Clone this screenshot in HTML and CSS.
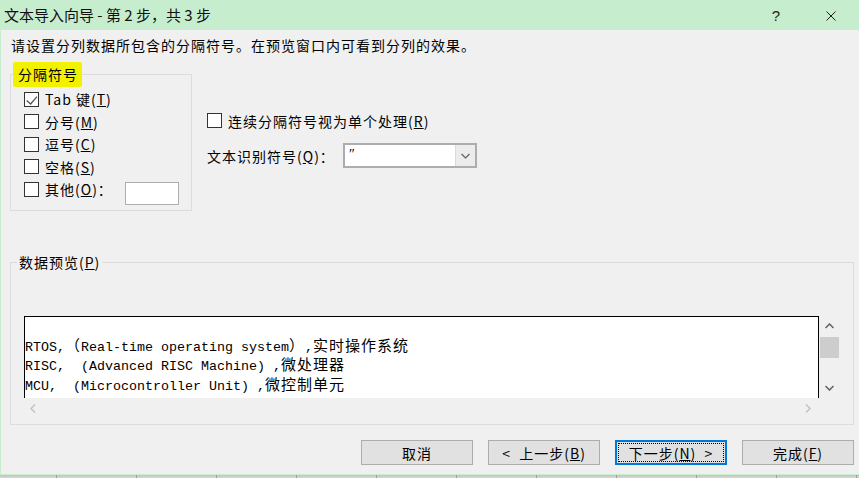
FILE: index.html
```html
<!DOCTYPE html>
<html lang="zh-CN">
<head>
<meta charset="utf-8">
<title>文本导入向导</title>
<link rel="stylesheet" href="styles.css">
</head>
<body>
<div class="window">
  <header class="titlebar">
    <span class="title">文本导入向导 - 第 2 步，共 3 步</span>
    <span class="tb-help">?</span>
    <svg class="tb-close" viewBox="0 0 10 10" width="10" height="10"><path d="M0.5 0.5L9.5 9.5M9.5 0.5L0.5 9.5" stroke="#1e1e1e" stroke-width="1" fill="none"/></svg>
  </header>
  <main class="client">
    <p class="intro">请设置分列数据所包含的分隔符号。在预览窗口内可看到分列的效果。</p>
    <div class="options">
      <fieldset class="group delims">
        <legend class="hl">分隔符号</legend>
        <div class="row"><span class="cb"><svg viewBox="0 0 13 13" width="13" height="13"><path d="M1.7 7.6L5.6 11L12 3.6" fill="none" stroke="#555" stroke-width="1.3"/></svg></span>Tab 键(<u>T</u>)</div>
        <div class="row"><span class="cb"></span>分号(<u>M</u>)</div>
        <div class="row"><span class="cb"></span>逗号(<u>C</u>)</div>
        <div class="row"><span class="cb"></span>空格(<u>S</u>)</div>
        <div class="row other"><span class="cb"></span>其他(<u>O</u>)：<span class="textbox"></span></div>
      </fieldset>
      <div class="mid">
        <div class="row"><span class="cb"></span>连续分隔符号视为单个处理(<u>R</u>)</div>
        <div class="row qual">
          <span class="qlabel">文本识别符号(<u>Q</u>)：</span>
          <span class="combo">
            <span class="combo-val">″</span>
            <span class="combo-btn"><svg viewBox="0 0 9 6" width="9" height="6"><path d="M0.5 1L4.5 5L8.5 1" fill="none" stroke="#606060" stroke-width="1.2"/></svg></span>
          </span>
        </div>
      </div>
    </div>
    <fieldset class="group preview">
      <legend>数据预览(<u>P</u>)</legend>
      <div class="pv">
        <div class="pv-list">
          <div class="pv-line"></div>
          <div class="pv-line">RTOS,<span class="cj">（</span>Real-time operating system<span class="cj">）</span>,<span class="cj">实时操作系统</span></div>
          <div class="pv-line">RISC,  (Advanced RISC Machine) ,<span class="cj">微处理器</span></div>
          <div class="pv-line">MCU,  (Microcontroller Unit) ,<span class="cj">微控制单元</span></div>
        </div>
        <div class="vscroll">
          <span class="sb-arrow"><svg viewBox="0 0 9 6" width="9" height="6"><path d="M0.5 5L4.5 1L8.5 5" fill="none" stroke="#606060" stroke-width="1.5"/></svg></span>
          <span class="thumb"></span>
          <span class="sb-fill"></span>
          <span class="sb-arrow"><svg viewBox="0 0 9 6" width="9" height="6"><path d="M0.5 1L4.5 5L8.5 1" fill="none" stroke="#606060" stroke-width="1.5"/></svg></span>
        </div>
        <div class="hscroll">
          <span class="hs-arrow"><svg viewBox="0 0 6 9" width="6" height="9"><path d="M5 0.5L1 4.5L5 8.5" fill="none" stroke="#c2c2c2" stroke-width="1.5"/></svg></span>
          <span class="hs-arrow"><svg viewBox="0 0 6 9" width="6" height="9"><path d="M1 0.5L5 4.5L1 8.5" fill="none" stroke="#c2c2c2" stroke-width="1.5"/></svg></span>
        </div>
      </div>
    </fieldset>
    <div class="buttons">
      <span class="btn">取消</span>
      <span class="btn">&lt;  上一步(<u>B</u>)</span>
      <span class="btn default"><span class="focus">下一步(<u>N</u>)  &gt;</span></span>
      <span class="btn">完成(<u>F</u>)</span>
    </div>
  </main>
  <div class="desk"></div>
</div>
</body>
</html>
```

FILE: styles.css
```css
* { box-sizing: border-box; }
html, body { margin: 0; padding: 0; }
body {
  width: 859px;
  height: 478px;
  overflow: hidden;
  background: #f0f0f0;
  font-family: "Noto Sans CJK SC", "Noto Sans", sans-serif;
  color: #000;
}
.window {
  display: flex;
  flex-direction: column;
  width: 859px;
  height: 478px;
}
.titlebar {
  flex: none;
  height: 30px;
  background: #c7edcf;
  display: flex;
  align-items: center;
}
.title {
  flex: 1;
  padding-left: 4px;
  font-size: 15px;
  line-height: 30px;
  color: #111;
  white-space: pre;
}
.tb-help {
  width: 12px;
  text-align: center;
  font-family: "Liberation Sans", sans-serif;
  font-size: 15px;
  color: #222;
  margin-right: 44px;
}
.tb-close {
  display: block;
  margin: 2px 23px 0 0;
}
.client {
  flex: none;
  height: 445px;
  background: #f0f0f0;
  border-left: 1px solid #c7edcf;
  border-bottom: 1px solid #c7edcf;
  display: flex;
  flex-direction: column;
  font-size: 14px;
  letter-spacing: 1px;
}
.intro {
  margin: 7px 0 0 10px;
  height: 16px;
  line-height: 16px;
}
.options {
  display: flex;
  align-items: flex-start;
  margin-top: 9px;
}
.group {
  margin: 0 0 0 9px;
  border: 1px solid #dcdcdc;
  padding: 0;
  min-width: 0;
}
.delims {
  width: 182px;
  padding: 1px 12px 9.5px 13px;
}
.hl {
  background: #f2f200;
  line-height: 25px;
  padding: 0 4px 0 5px;
  margin-left: -11px;
  border-radius: 2px;
}
.row {
  display: flex;
  align-items: center;
  height: 22.5px;
  white-space: nowrap;
}
.cb {
  flex: none;
  display: block;
  width: 15px;
  height: 15px;
  border: 1px solid #333;
  background: #fff;
  margin-right: 6px;
}
.cb svg { display: block; }
.textbox {
  display: block;
  width: 54px;
  height: 23px;
  margin: 8px 0 0 auto;
  background: #fff;
  border: 1px solid #abadb3;
}
.mid {
  display: flex;
  flex-direction: column;
  margin-left: 15px;
  padding-top: 47.5px;
}
.mid .row { height: 22px; }
.mid .qual {
  height: 25px;
  margin-top: 11.5px;
}
.qlabel {
  width: 136px;
  flex: none;
}
.combo {
  display: flex;
  width: 134px;
  height: 25px;
  border: 2px solid #adadad;
  background: #fff;
}
.combo-val {
  flex: 1;
  padding-left: 4px;
  line-height: 20px;
  font-family: "Liberation Serif", serif;
  font-size: 14px;
}
.combo-btn {
  width: 20px;
  background: #ececec;
  border-left: 1px solid #dadada;
  display: flex;
  align-items: center;
  justify-content: center;
}
.combo-btn svg { display: block; }
.preview {
  margin-top: 43px;
  width: 844px;
  padding: 46px 0 6px 13px;
}
.preview legend {
  padding: 0 2px;
  margin-left: -7px;
  line-height: 16px;
}
.pv {
  display: grid;
  grid-template-columns: 795px 20px;
  grid-template-rows: 82px 20px;
}
.pv-list {
  background: #fff;
  border: 1px solid #000;
  border-bottom: none;
  overflow: hidden;
  font-family: "Liberation Mono", monospace;
  font-size: 13.33px;
  letter-spacing: 0;
}
.pv-line {
  height: 19.7px;
  line-height: 19.7px;
  white-space: pre;
}
.cj {
  font-family: "Noto Sans CJK SC", sans-serif;
  font-size: 15px;
  letter-spacing: 1px;
  line-height: 1;
}
.vscroll {
  display: flex;
  flex-direction: column;
}
.sb-arrow {
  height: 20px;
  display: flex;
  align-items: center;
  justify-content: center;
  flex: none;
}
.sb-arrow svg, .hs-arrow svg { display: block; }
.thumb {
  display: block;
  height: 21px;
  margin: 1px 0 0 1px;
  background: #cdcdcd;
  flex: none;
}
.sb-fill { flex: 1; }
.hscroll {
  display: flex;
  justify-content: space-between;
  padding-right: 2px;
}
.hs-arrow {
  width: 18px;
  display: flex;
  align-items: center;
  justify-content: center;
}
.buttons {
  display: flex;
  justify-content: flex-end;
  gap: 15px;
  margin-top: 15px;
  padding-right: 5px;
}
.btn {
  width: 112px;
  height: 25px;
  border: 1px solid #adadad;
  background: #e1e1e1;
  display: flex;
  align-items: center;
  justify-content: center;
  white-space: pre;
}
.btn.default {
  border: 2px solid #0078d7;
}
.focus {
  flex: 1;
  align-self: stretch;
  margin: 1px;
  border: 1px dotted #000;
  display: flex;
  align-items: center;
  justify-content: center;
  white-space: pre;
}
.desk {
  flex: none;
  height: 3px;
  background:
    repeating-linear-gradient(to right, transparent 0 56px, #a0a0a0 56px 57px, transparent 57px 80px),
    linear-gradient(#c4c4c4, #d6d6d6);
}
```
